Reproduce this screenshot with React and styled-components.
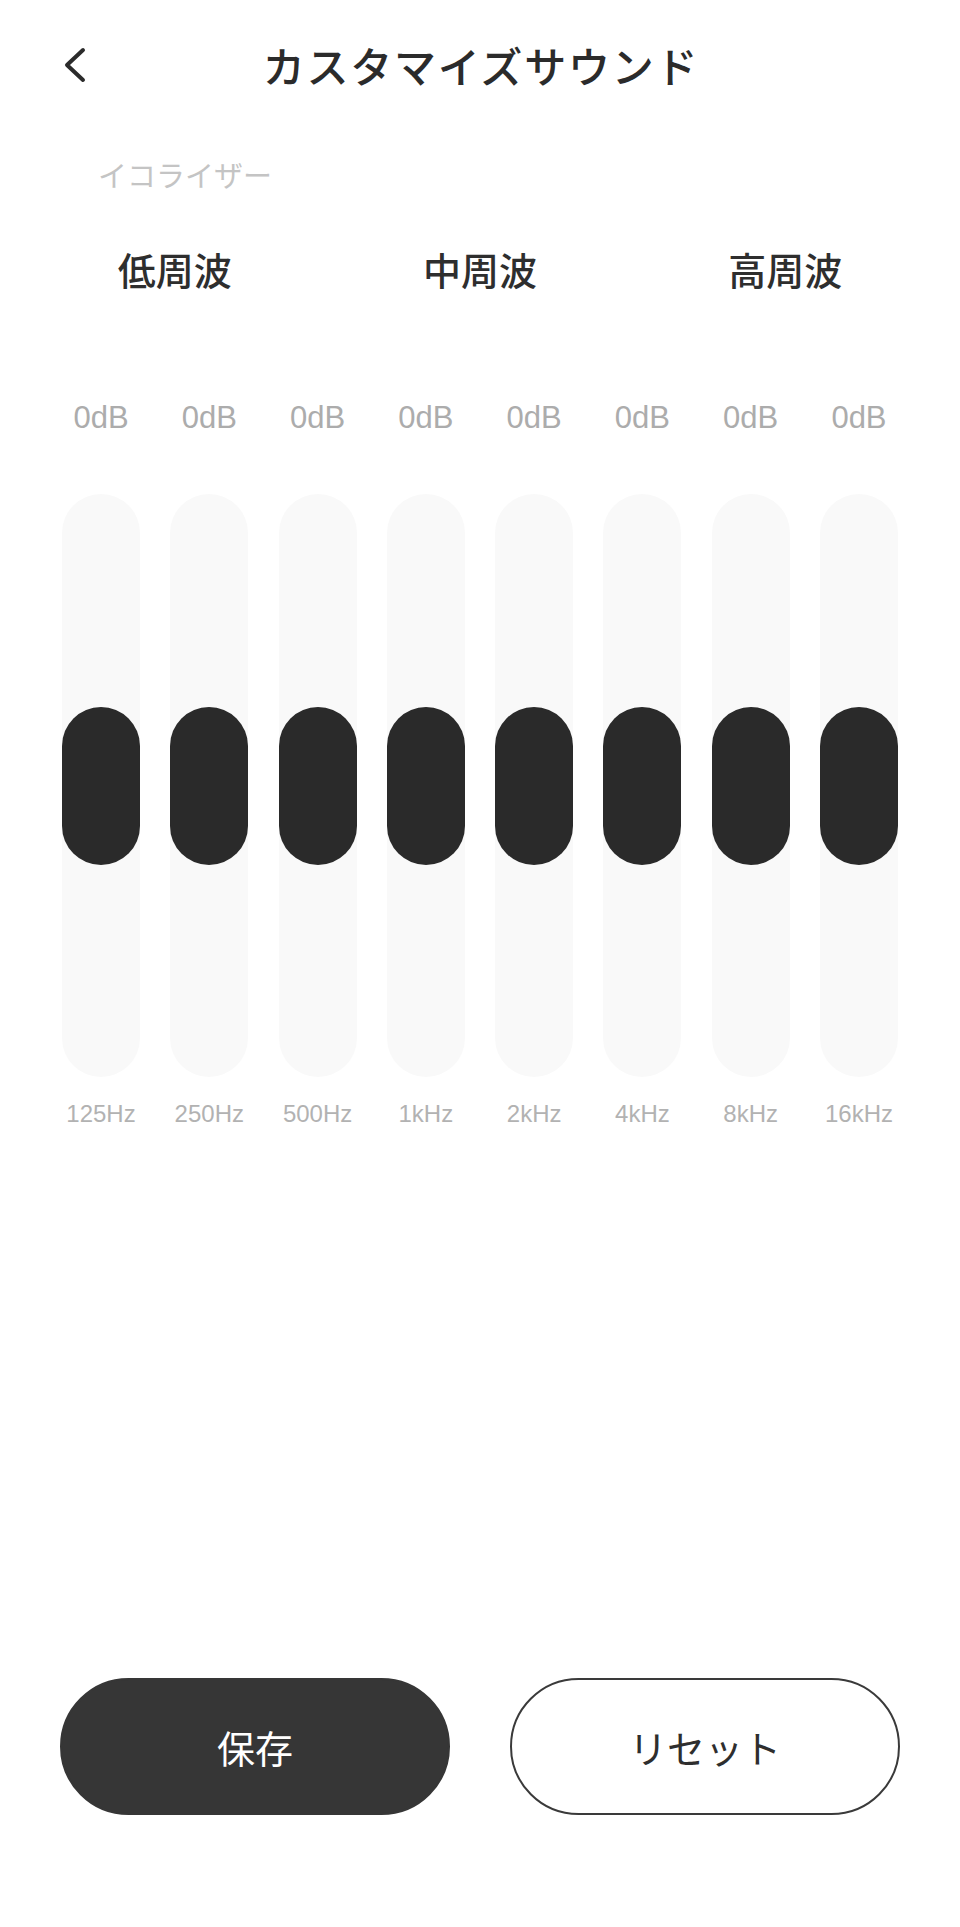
import React from 'react'
import styled, { createGlobalStyle } from 'styled-components'

const GlobalStyle = createGlobalStyle`
  html, body {
    margin: 0;
    padding: 0;
    background: #fff;
  }
  * { box-sizing: border-box; }
`

const jp = `"Noto Sans CJK JP", "Noto Sans", sans-serif`
const latin = `"Liberation Sans", Arial, sans-serif`

const Page = styled.div`
  display: flex;
  flex-direction: column;
  width: 960px;
  min-height: 1927px;
  padding-bottom: 112px;
  background: #fff;
  font-family: ${jp};
`
const Header = styled.header`
  display: grid;
  grid-template-columns: 1fr auto 1fr;
  align-items: center;
  height: 130px;
`
const BackButton = styled.button`
  justify-self: start;
  display: flex;
  align-items: center;
  margin-left: 62px;
  padding: 0;
  border: none;
  background: none;
  cursor: pointer;
`
const Title = styled.h1`
  margin: 0;
  padding-left: 2px;
  font-size: 42px;
  line-height: 1;
  font-weight: 500;
  color: #2b2b2b;
  letter-spacing: 1.8px;
`
const SectionLabel = styled.div`
  margin-top: 30px;
  padding-left: 98px;
  font-size: 29px;
  line-height: 1;
  color: #c4c4c4;
`
const BandRow = styled.div`
  display: grid;
  grid-template-columns: repeat(3, 1fr);
  margin-top: 61px;
  padding: 0 22px;
`
const BandName = styled.div`
  text-align: center;
  font-size: 38px;
  line-height: 1;
  font-weight: 500;
  color: #2e2e2e;
`
const Equalizer = styled.div`
  display: flex;
  justify-content: space-between;
  width: 836px;
  margin: 114px auto 0;
`
const Channel = styled.div`
  display: flex;
  flex-direction: column;
  align-items: center;
  width: 78px;
`
const Gain = styled.div`
  font-family: ${latin};
  font-size: 31px;
  line-height: 1;
  color: #acacac;
  white-space: nowrap;
`
const Track = styled.div`
  display: flex;
  align-items: center;
  width: 78px;
  height: 583px;
  margin-top: 61px;
  border-radius: 39px;
  background: #f9f9f9;
`
const Thumb = styled.div`
  width: 78px;
  height: 158px;
  border-radius: 39px;
  background: #2a2a2a;
`
const Freq = styled.div`
  margin-top: 25px;
  font-family: ${latin};
  font-size: 24px;
  line-height: 1;
  color: #b2b2b2;
  white-space: nowrap;
`
const Actions = styled.div`
  display: flex;
  gap: 60px;
  margin-top: auto;
  padding: 0 60px;
`
const PillButton = styled.button`
  flex: 1;
  height: 137px;
  border-radius: 69px;
  border: 2px solid ${p => (p.$primary ? '#363636' : '#3a3a3a')};
  background: ${p => (p.$primary ? '#363636' : '#fff')};
  color: ${p => (p.$primary ? '#fff' : '#2e2e2e')};
  font-family: ${jp};
  font-size: 38px;
  font-weight: 400;
  cursor: pointer;
`

const bands = ['低周波', '中周波', '高周波']
const channels = [
  { freq: '125Hz', gain: 0 },
  { freq: '250Hz', gain: 0 },
  { freq: '500Hz', gain: 0 },
  { freq: '1kHz', gain: 0 },
  { freq: '2kHz', gain: 0 },
  { freq: '4kHz', gain: 0 },
  { freq: '8kHz', gain: 0 },
  { freq: '16kHz', gain: 0 },
]

const Chevron = () => (
  <svg width="26" height="36" viewBox="0 0 26 36" fill="none">
    <path d="M21 3 L5 18 L21 33" stroke="#2b2b2b" strokeWidth="4" strokeLinecap="round" strokeLinejoin="round" />
  </svg>
)

export default function App() {
  return (
    <Page>
      <GlobalStyle />
      <Header>
        <BackButton aria-label="戻る">
          <Chevron />
        </BackButton>
        <Title>カスタマイズサウンド</Title>
        <span />
      </Header>
      <SectionLabel>イコライザー</SectionLabel>
      <BandRow>
        {bands.map(b => (
          <BandName key={b}>{b}</BandName>
        ))}
      </BandRow>
      <Equalizer>
        {channels.map(c => (
          <Channel key={c.freq}>
            <Gain>{c.gain}dB</Gain>
            <Track>
              <Thumb />
            </Track>
            <Freq>{c.freq}</Freq>
          </Channel>
        ))}
      </Equalizer>
      <Actions>
        <PillButton $primary>保存</PillButton>
        <PillButton>リセット</PillButton>
      </Actions>
    </Page>
  )
}
